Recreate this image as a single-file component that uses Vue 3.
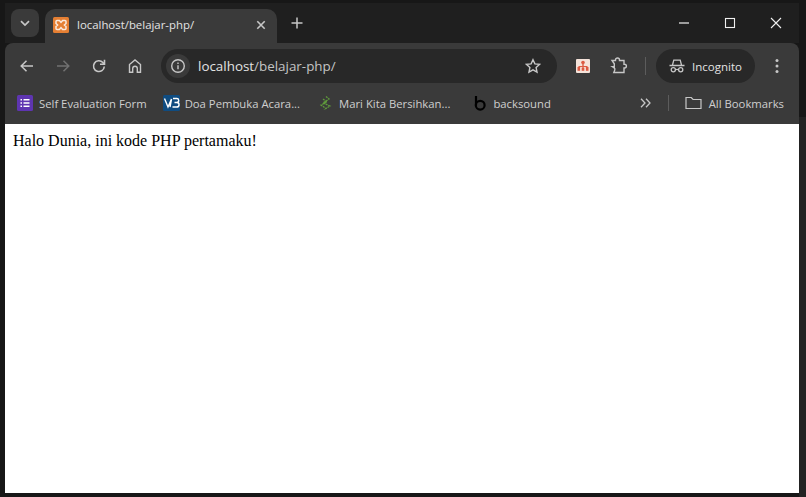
<template>
  <div class="screen">
    <div class="window">
      <div class="tabstrip">
        <button class="tab-search">
          <svg width="12" height="12" viewBox="0 0 12 12"><path d="M2 4.2 6 8l4-3.8" class="stroke" stroke-width="1.7" /></svg>
        </button>
        <div class="tab">
          <svg class="favicon" width="16" height="16" viewBox="0 0 16 16">
            <rect width="16" height="16" rx="1.5" fill="#e57f33" />
            <path d="M4 3.5h2.4L8 5.4 9.6 3.5H12a1 1 0 0 1 1 1v2L11.4 8 13 9.5v2a1 1 0 0 1-1 1H9.6L8 10.6 6.4 12.500H4a1 1 0 0 1-1-1v-2L4.6 8 3 6.5v-2a1 1 0 0 1 1-1Z" fill="none" stroke="#fbeadd" stroke-width="1.5" />
          </svg>
          <span class="tab-title">localhost/belajar-php/</span>
          <svg width="10" height="10" viewBox="0 0 10 10"><path d="M1.3 1.3l7.4 7.4M8.700 1.300 1.300 8.700" class="stroke" stroke-width="1.6" /></svg>
        </div>
        <svg class="new-tab" width="12" height="12" viewBox="0 0 12 12"><path d="M6 .5v11M.5 6h11" class="stroke" stroke-width="1.5" /></svg>
        <div class="window-controls">
          <svg width="12" height="12" viewBox="0 0 12 12"><path d="M1 6h10" stroke="#f0f0f0" stroke-width="1.200" /></svg>
          <svg width="12" height="12" viewBox="0 0 12 12"><rect x="1.500" y="1.500" width="9" height="9" fill="none" stroke="#f0f0f0" stroke-width="1.100" /></svg>
          <svg width="12" height="12" viewBox="0 0 12 12"><path d="M1 1l10 10M11 1 1 11" stroke="#f0f0f0" stroke-width="1.100" /></svg>
        </div>
      </div>

      <div class="toolbar">
        <div class="nav">
          <svg width="16" height="16" viewBox="0 0 16 16"><path d="M14 8H2.500M7.500 2.700 2.200 8l5.300 5.300" class="stroke" stroke-width="1.500" /></svg>
          <svg width="16" height="16" viewBox="0 0 16 16"><path d="M2 8h11.500M8.500 2.700 13.800 8l-5.300 5.300" fill="none" stroke="#717171" stroke-width="1.500" /></svg>
          <svg width="16" height="16" viewBox="0 0 16 16"><path d="M13.300 8.500a5.400 5.400 0 1 1-1.400-4L13.500 6M13.500 1.800v4.500H9" class="stroke" stroke-width="1.600" /></svg>
          <svg width="16" height="16" viewBox="0 0 16 16"><path d="M2.500 14.200V6.500L8 2l5.500 4.500v7.700h-3.200V10.500a2.300 2.300 0 0 0-4.600 0v3.700Z" class="stroke" stroke-width="1.400" /></svg>
        </div>
        <div class="omnibox">
          <span class="info">
            <svg width="16" height="16" viewBox="0 0 16 16"><circle cx="8" cy="8" r="6.300" class="stroke" stroke-width="1.400" /><path d="M8 7.200v4M8 4.400v1.500" class="stroke" stroke-width="1.400" /></svg>
          </span>
          <span class="url">localhost<span class="url-path">/belajar-php/</span></span>
          <svg class="star" width="16" height="16" viewBox="0 0 16 16"><path d="M8 1.700l1.900 4.200 4.600.5-3.400 3.100.9 4.600L8 11.800l-4 2.300.9-4.600L1.500 6.400l4.600-.5Z" class="stroke" stroke-width="1.400" /></svg>
        </div>
        <svg class="ext" width="14" height="14" viewBox="0 0 14 14">
          <rect width="14" height="14" rx="1" fill="#f5e3da" />
          <g fill="#dc5a42">
            <circle cx="7" cy="3.500" r="1.800" />
            <rect x="6.300" y="4.500" width="1.400" height="5" />
            <rect x="2.500" y="7" width="9" height="1.100" />
            <rect x="1.500" y="8" width="2.600" height="3.800" />
            <rect x="5.700" y="9" width="2.600" height="2.800" />
            <rect x="9.900" y="8" width="2.600" height="3.800" />
          </g>
        </svg>
        <svg class="puzzle" width="18" height="18" viewBox="0 0 18 18"><path d="M2 3.500h3.500V3a2 2 0 0 1 4 0v.5H14v3.700h.5a1.900 1.900 0 0 1 0 3.800H14v4.500H3.800l.9-2.200a2 2 0 0 0-.5-2.400L2.500 9.800H4.300V6.800Z" class="stroke" stroke-width="1.400" /></svg>
        <span class="toolbar-sep"></span>
        <div class="incognito">
          <svg width="16" height="14" viewBox="0 0 16 14">
            <path d="M.5 6.500h15M3.500 6 4.800 1.200h6.400L12.500 6" class="stroke" stroke-width="1.300" />
            <circle cx="4.300" cy="10.800" r="2.100" class="stroke" stroke-width="1.300" />
            <circle cx="11.700" cy="10.800" r="2.100" class="stroke" stroke-width="1.300" />
            <path d="M6.400 10.500h3.200" class="stroke" stroke-width="1.200" />
          </svg>
          <span>Incognito</span>
        </div>
        <svg class="menu" width="4" height="16" viewBox="0 0 4 16"><circle cx="2" cy="2.500" r="1.500" fill="#c7c7c7" /><circle cx="2" cy="8" r="1.500" fill="#c7c7c7" /><circle cx="2" cy="13.500" r="1.500" fill="#c7c7c7" /></svg>
      </div>

      <div class="bookmarks">
        <div class="bookmark b-form">
          <svg width="16" height="16" viewBox="0 0 16 16">
            <rect width="16" height="16" rx="1.500" fill="#5e35b1" />
            <path d="M3.500 4.800h1.500M6.500 4.800h6M3.500 8h1.500M6.500 8h6M3.500 11.200h1.500M6.500 11.200h6" stroke="#fff" stroke-width="1.500" />
          </svg>
          <span>Self Evaluation Form</span>
        </div>
        <div class="bookmark b-doa">
          <svg width="17" height="16" viewBox="0 0 17 16">
            <rect width="17" height="16" rx="1.500" fill="#0f4c81" />
            <path d="M1.500 3.500 5 12 8.500 4 7 12" fill="none" stroke="#fff" stroke-width="1.400" />
            <path d="M10 3.500h3.500a2 2 0 0 1 .4 4H11.500h2.400a2.200 2.200 0 0 1-.2 4.500H9.500" fill="none" stroke="#fff" stroke-width="1.400" />
          </svg>
          <span>Doa Pembuka Acara...</span>
        </div>
        <div class="bookmark b-mari">
          <svg width="14" height="16" viewBox="0 0 14 16">
            <path d="M8 1.500 11 4 5 8l7 3-6 3.500M5 4l4 3-6 3 5 3.500" fill="none" stroke="#5f9a3c" stroke-width="1.300" stroke-dasharray="2 .8" />
          </svg>
          <span>Mari Kita Bersihkan...</span>
        </div>
        <div class="bookmark b-back">
          <svg width="14" height="16" viewBox="0 0 14 16">
            <path d="M3 1v9.500" stroke="#000" stroke-width="2.200" />
            <circle cx="7.200" cy="10.200" r="4.400" fill="none" stroke="#000" stroke-width="2.200" />
          </svg>
          <span>backsound</span>
        </div>
        <svg class="chevrons" width="11" height="10" viewBox="0 0 11 10"><path d="M1 .8 5 5 1 9.200M6 .8 10 5 6 9.200" class="stroke" stroke-width="1.300" /></svg>
        <span class="bookmarks-sep"></span>
        <div class="bookmark all">
          <svg width="17" height="14" viewBox="0 0 17 14"><path d="M1 12.500V1.500h5.300L8 3.500h8v9Z" class="stroke" stroke-width="1.200" /></svg>
          <span>All Bookmarks</span>
        </div>
      </div>

      <div class="page">Halo Dunia, ini kode PHP pertamaku!</div>
    </div>
  </div>
</template>

<script setup>
</script>

<style>
html, body {
  margin: 0;
  background: #171717;
}
</style>

<style scoped>
.screen {
  width: 806px;
  height: 497px;
  box-sizing: border-box;
  padding: 3px 7px 4px 5px;
  background: linear-gradient(#171717 117px, #222 117px) right / 7px 100% no-repeat, #171717;
  overflow: hidden;
}

.window {
  height: 100%;
  display: flex;
  flex-direction: column;
  font-family: "Open Sans", "Noto Sans", sans-serif;
  color: #d6d6d6;
}

.stroke {
  fill: none;
  stroke: #c7c7c7;
}

.tabstrip {
  height: 40px;
  flex: none;
  display: flex;
  align-items: flex-end;
  background: #1f1f1f;
}

.tab-search {
  width: 28px;
  height: 28px;
  margin: 0 6px 6px 6px;
  padding: 0;
  border: 0;
  border-radius: 8px;
  background: #3a3a3a;
  display: flex;
  align-items: center;
  justify-content: center;
}

.tab {
  width: 232px;
  height: 34px;
  box-sizing: border-box;
  padding: 0 11px 3px 8px;
  border-radius: 10px 10px 0 0;
  background: #3a3a3a;
  display: flex;
  align-items: center;
}

.favicon {
  margin-right: 8px;
  flex: none;
}

.tab-title {
  flex: 1;
  font-size: 11.4px;
  color: #e3e3e3;
}

.new-tab {
  margin: 0 0 14px 14px;
}

.window-controls {
  margin-left: auto;
  margin-right: 17px;
  margin-bottom: 14px;
  display: flex;
  gap: 34px;
}

.toolbar {
  height: 40px;
  flex: none;
  display: flex;
  align-items: center;
  padding-top: 6px;
  box-sizing: border-box;
  background: #3a3a3a;
  border-radius: 8px 8px 0 0;
}

.nav {
  display: flex;
  gap: 20px;
  margin-left: 14px;
}

.omnibox {
  width: 396px;
  height: 34px;
  margin-left: 18px;
  border-radius: 17px;
  background: #282828;
  display: flex;
  align-items: center;
  box-sizing: border-box;
  padding: 0 16px 0 5px;
}

.info {
  width: 24px;
  height: 24px;
  border-radius: 50%;
  background: #3a3a3a;
  display: flex;
  align-items: center;
  justify-content: center;
}

.url {
  flex: 1;
  margin-left: 8px;
  font-size: 13.4px;
  color: #e3e3e3;
}

.url-path {
  color: #c4c4c4;
}

.ext {
  margin-left: 19px;
}

.puzzle {
  margin-left: 20px;
}

.toolbar-sep {
  width: 1px;
  height: 18px;
  margin-left: 17px;
  background: #5c5c5c;
}

.incognito {
  width: 99px;
  height: 34px;
  margin-left: 10px;
  border-radius: 17px;
  background: #282828;
  display: flex;
  align-items: center;
  gap: 7px;
  box-sizing: border-box;
  padding-left: 13px;
  font-size: 11.5px;
  color: #e3e3e3;
}

.menu {
  margin-left: 20px;
}

.bookmarks {
  height: 41px;
  flex: none;
  display: flex;
  align-items: center;
  padding: 0 15px 1px 12px;
  box-sizing: border-box;
  background: #3a3a3a;
  font-size: 11.3px;
  color: #cfcfcf;
}

.bookmark {
  display: flex;
  align-items: center;
  gap: 6px;
  white-space: nowrap;
}

.b-doa {
  margin-left: 16px;
  gap: 5px;
}

.b-mari {
  margin-left: 18px;
  gap: 7px;
}

.b-back {
  margin-left: 23px;
  gap: 6px;
}

.chevrons {
  margin-left: auto;
}

.bookmarks-sep {
  width: 1px;
  height: 16px;
  margin-left: 17px;
  background: #5c5c5c;
}

.all {
  margin-left: 16px;
  gap: 7px;
}

.page {
  flex: 1;
  padding: 8px;
  background: #fff;
  color: #000;
  font-family: "Liberation Serif", "Times New Roman", serif;
  font-size: 16px;
}
</style>
